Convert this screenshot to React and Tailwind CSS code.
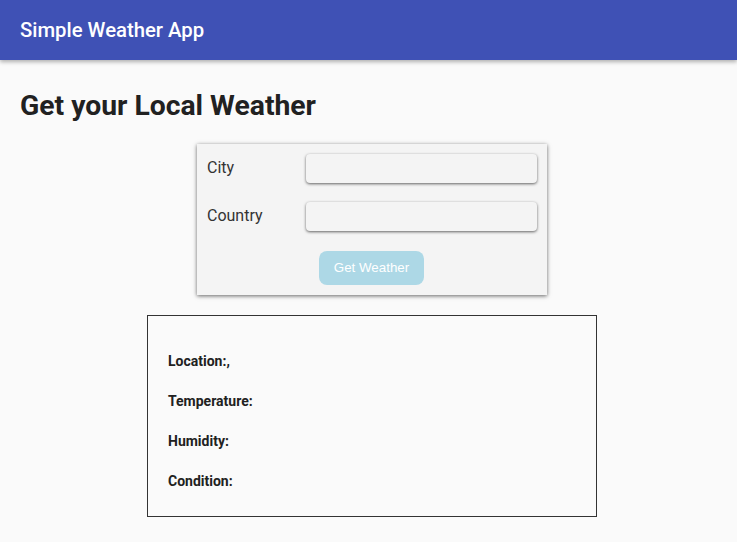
import React from 'react';

const App = () => {
  return (
    <div className="min-h-[542px] bg-[#fafafa] font-['Roboto',sans-serif] text-[#212121]">
      <header className="h-[60px] bg-[#3f51b5] flex items-center px-5 shadow-[0_2px_4px_rgba(0,0,0,0.3)]">
        <h2 className="text-white text-[20.3px] font-medium">Simple Weather App</h2>
      </header>

      <main>
        <h1 className="ml-5 mt-[30px] text-[28.3px] font-bold leading-[32px]">Get your Local Weather</h1>

        <div className="flex flex-col items-center pl-[7px]">
          <div className="mt-[22px] w-[350px] bg-[#f4f4f4] shadow-[0_1px_4px_rgba(0,0,0,0.6)] px-[10px] pt-[10px] pb-[10px]">
            <div className="flex items-center h-[29px]">
              <label className="w-[99px] pb-[2px] text-[16px] text-[#333]">City</label>
              <input className="w-[232px] h-[29px] rounded-[4px] bg-[#f4f4f4] shadow-[0_1px_3px_rgba(0,0,0,0.6)] outline-none" />
            </div>
            <div className="flex items-center h-[29px] mt-[19px]">
              <label className="w-[99px] pb-[2px] text-[16px] text-[#333]">Country</label>
              <input className="w-[232px] h-[29px] rounded-[4px] bg-[#f4f4f4] shadow-[0_1px_3px_rgba(0,0,0,0.6)] outline-none" />
            </div>
            <div className="flex justify-center mt-[20px] pr-[1px]">
              <button className="w-[105px] h-[34px] rounded-[8px] bg-[#add8e6] text-white text-[13.33px] font-['Liberation_Sans',Arial,sans-serif]">
                Get Weather
              </button>
            </div>
          </div>

          <div className="mt-[20px] w-[450px] h-[202px] border border-[#333] px-5 pt-[35px]">
            <p className="text-[14px] font-bold h-[40px]">Location:,</p>
            <p className="text-[14px] font-bold h-[40px]">Temperature:</p>
            <p className="text-[14px] font-bold h-[40px]">Humidity:</p>
            <p className="text-[14px] font-bold h-[40px]">Condition:</p>
          </div>
        </div>
      </main>
    </div>
  );
};

export default App;
